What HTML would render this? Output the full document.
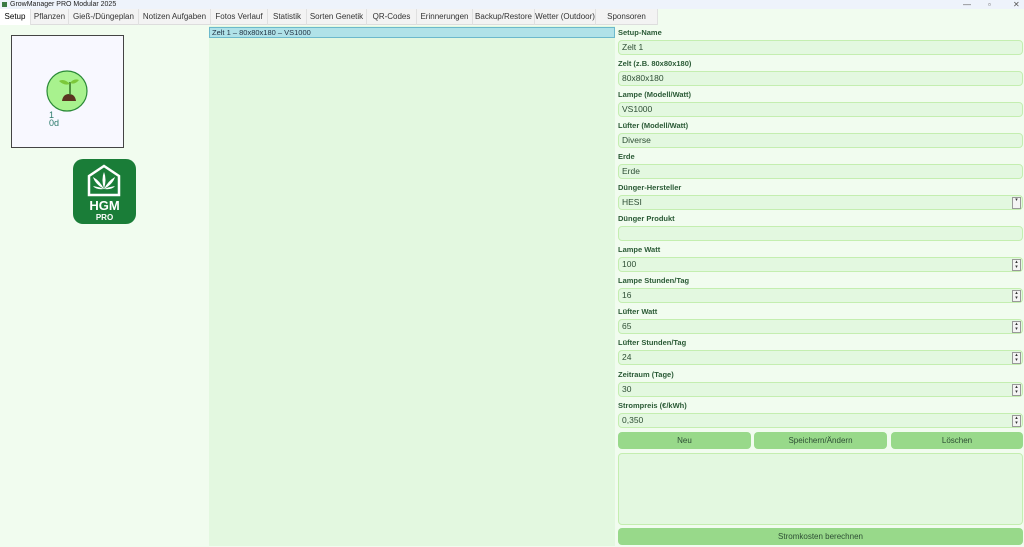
<!DOCTYPE html>
<html><head><meta charset="utf-8"><style>
*{box-sizing:border-box;margin:0;padding:0}
body{width:1024px;height:547px;overflow:hidden;background:#f1fcef;font-family:"Liberation Sans",sans-serif;font-size:8px;color:#1e4d2b;position:relative}
.title{position:absolute;left:0;top:0;width:1024px;height:9px;background:#eef3fb;font-size:7px;color:#222;line-height:9px;padding-left:10px}
.title i{position:absolute;left:2px;top:2px;width:5px;height:5px;background:#3a7a45}
.tabs{position:absolute;top:9px;left:0;height:16px;width:658px;background:#f3f3f3;border-bottom:1px solid #ddd}
.tab{position:absolute;top:0;height:16px;line-height:16px;font-size:8px;color:#333;border-right:1px solid #e0e0e0;text-align:center}
.tab.act{background:#fff;color:#000}
.wc{position:absolute;top:0;font-size:8px;color:#555}
.list{position:absolute;left:209px;top:26px;width:406px;height:520px;background:#e3f8e0}
.sel{position:absolute;left:209px;top:27px;width:406px;height:11px;background:#b0e2e8;border:1px solid #6cb9cc;font-size:7.5px;line-height:9px;padding-left:2px;color:#234}
.lbl{position:absolute;left:618px;font-size:7.5px;font-weight:bold;color:#2a5a35}
.inp{position:absolute;left:618px;width:405px;height:15px;background:#e3f8e0;border:1px solid #c4eeb0;border-radius:4px;font-size:8.5px;line-height:13px;padding-left:3px;color:#2d4d34}
.spin{position:absolute;right:1px;top:1px;width:9px;height:12px;border:1px solid #999;background:#f4f4f4;font-size:5px;line-height:5px;text-align:center;color:#333}
.btn{position:absolute;height:17px;background:#98d98a;border-radius:4px;text-align:center;line-height:17px;font-size:8px;color:#2d4d34}
</style></head><body>
<div class="title"><i></i>GrowManager PRO Modular 2025</div>
<span class="wc" style="left:963px">—</span><span class="wc" style="left:988px">▫</span><span class="wc" style="left:1013px">✕</span>
<div class="tabs">
<div class="tab act" style="left:0;width:31px">Setup</div>
<div class="tab" style="left:31px;width:38px">Pflanzen</div>
<div class="tab" style="left:69px;width:70px">Gieß-/Düngeplan</div>
<div class="tab" style="left:139px;width:72px">Notizen Aufgaben</div>
<div class="tab" style="left:211px;width:57px">Fotos Verlauf</div>
<div class="tab" style="left:268px;width:39px">Statistik</div>
<div class="tab" style="left:307px;width:60px">Sorten Genetik</div>
<div class="tab" style="left:367px;width:50px">QR-Codes</div>
<div class="tab" style="left:417px;width:56px">Erinnerungen</div>
<div class="tab" style="left:473px;width:62px">Backup/Restore</div>
<div class="tab" style="left:535px;width:61px">Wetter (Outdoor)</div>
<div class="tab" style="left:596px;width:62px">Sponsoren</div>
</div>
<div style="position:absolute;left:11px;top:35px;width:113px;height:113px;background:#f8f8ff;border:1.5px solid #444"></div>
<svg style="position:absolute;left:45px;top:70px" width="44" height="44" viewBox="0 0 44 44">
<circle cx="22" cy="21" r="20" fill="#a8f28e" stroke="#2b8a38" stroke-width="1.2"/>
<path d="M17 31 Q18 24 24 24 Q30 24 31 31Z" fill="#5a3520"/>
<path d="M25 25 V12" stroke="#3b7a2a" stroke-width="1.6"/>
<path d="M25 14 Q19 8 14 11 Q19 16 25 14Z" fill="#7cc83a"/>
<path d="M25 13 Q29 8 34 10 Q30 15 25 13Z" fill="#7cc83a"/>
</svg>
<div style="position:absolute;left:49px;top:111px;font-size:9px;line-height:8px;color:#2a7a6a">1<br>0d</div>
<svg style="position:absolute;left:73px;top:159px" width="63" height="65" viewBox="0 0 63 65">
<rect width="63" height="65" rx="10" fill="#1a7d38"/>
<path d="M16 36 V17 L31 7 L46 17 V36Z" fill="none" stroke="#fff" stroke-width="2.5"/>
<path d="M31 13 Q34 20 31 30 Q28 20 31 13Z M31 30 Q22 25 20 18 Q27 22 31 30Z M31 30 Q40 25 42 18 Q35 22 31 30Z M31 30 Q23 31 20 27 Q26 28 31 30Z M31 30 Q39 31 42 27 Q36 28 31 30Z" fill="#fff"/>
<text x="31.5" y="51" text-anchor="middle" font-family="Liberation Sans" font-weight="bold" font-size="13" fill="#fff">HGM</text>
<text x="31.5" y="61" text-anchor="middle" font-family="Liberation Sans" font-weight="bold" font-size="8" fill="#fff">PRO</text>
</svg>
<div class="list"></div>
<div class="sel">Zelt 1 – 80x80x180 – VS1000</div>

<div class="lbl" style="top:28px">Setup-Name</div><div class="inp" style="top:40px">Zelt 1</div>
<div class="lbl" style="top:59px">Zelt (z.B. 80x80x180)</div><div class="inp" style="top:71px">80x80x180</div>
<div class="lbl" style="top:90px">Lampe (Modell/Watt)</div><div class="inp" style="top:102px">VS1000</div>
<div class="lbl" style="top:121px">Lüfter (Modell/Watt)</div><div class="inp" style="top:133px">Diverse</div>
<div class="lbl" style="top:152px">Erde</div><div class="inp" style="top:164px">Erde</div>
<div class="lbl" style="top:183px">Dünger-Hersteller</div><div class="inp" style="top:195px">HESI<div class="spin">▾</div></div>
<div class="lbl" style="top:214px">Dünger Produkt</div><div class="inp" style="top:226px"></div>
<div class="lbl" style="top:245px">Lampe Watt</div><div class="inp" style="top:257px">100<div class="spin">▴<br>▾</div></div>
<div class="lbl" style="top:276px">Lampe Stunden/Tag</div><div class="inp" style="top:288px">16<div class="spin">▴<br>▾</div></div>
<div class="lbl" style="top:307px">Lüfter Watt</div><div class="inp" style="top:319px">65<div class="spin">▴<br>▾</div></div>
<div class="lbl" style="top:338px">Lüfter Stunden/Tag</div><div class="inp" style="top:350px">24<div class="spin">▴<br>▾</div></div>
<div class="lbl" style="top:370px">Zeitraum (Tage)</div><div class="inp" style="top:382px">30<div class="spin">▴<br>▾</div></div>
<div class="lbl" style="top:401px">Strompreis (€/kWh)</div><div class="inp" style="top:413px">0,350<div class="spin">▴<br>▾</div></div>
<div class="btn" style="left:618px;top:432px;width:133px">Neu</div>
<div class="btn" style="left:754px;top:432px;width:133px">Speichern/Ändern</div>
<div class="btn" style="left:891px;top:432px;width:132px">Löschen</div>
<div style="position:absolute;left:618px;top:453px;width:405px;height:72px;background:#e3f8e0;border:1px solid #c4eeb0;border-radius:4px"></div>
<div class="btn" style="left:618px;top:528px;width:405px">Stromkosten berechnen</div>
</body></html>
